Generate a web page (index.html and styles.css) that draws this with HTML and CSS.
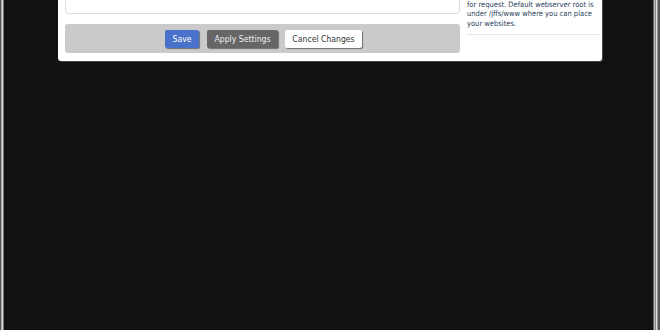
FILE: index.html
```html
<!DOCTYPE html>
<html lang="en">
<head>
    <meta charset="UTF-8">
    <meta name="viewport" content="width=device-width, initial-scale=1.0">
    <title>Lighttpd Settings</title>
    <link rel="stylesheet" href="styles.css">
</head>
<body>
    <div class="frame">
        <!-- Settings panel -->
        <div class="panel">
            <div class="main-col">
                <div class="section">
                    <div class="setting-row">
                        <span class="setting-label">gzip compression</span>
                        <label class="radio"><input type="radio" name="gzip" checked> Enable</label>
                        <label class="radio"><input type="radio" name="gzip"> Disable</label>
                    </div>
                </div>

                <div class="btn-bar">
                    <button type="button" class="save-btn">Save</button>
                    <button type="button" class="apply-btn">Apply Settings</button>
                    <button type="button" class="cancel-btn">Cancel Changes</button>
                </div>
            </div>

            <div class="help-col">
                <p class="help-text">Lighttpd is a lightweight web server<br>with a small memory footprint. Set<br>the HTTP/HTTPS port lighttpd will listen<br>for request. Default webserver root is<br>under /jffs/www where you can place<br>your websites.</p>
                <div class="help-sep"></div>
            </div>
        </div>
    </div>
</body>
</html>
```

FILE: styles.css
```css
/* Page frame */
body {
    margin: 0;
    padding: 0;
    height: 330px;
    overflow: hidden;
    font-family: "DejaVu Sans Condensed", "DejaVu Sans", sans-serif;
    font-stretch: condensed;
    background: #111111;
}

.frame {
    height: 330px;
    background: linear-gradient(to right,
        #555 0, #555 1px, #aaa 1px, #aaa 2px, #d8d8d8 2px, #d8d8d8 3px, #777 3px, #777 4px,
        #111 4px, #111 calc(100% - 7px),
        #666 calc(100% - 7px), #666 calc(100% - 6px), #bbb calc(100% - 6px), #bbb calc(100% - 5px),
        #888 calc(100% - 5px), #888 calc(100% - 4px), #ddd calc(100% - 4px), #ddd calc(100% - 3px),
        #999 calc(100% - 3px), #999 calc(100% - 2px), #555 calc(100% - 2px));
    overflow: hidden;
}

.panel {
    display: flex;
    gap: 7px;
    width: 544px;
    margin: -30px 0 0 58px;
    padding: 0 2px 8px 7px;
    box-sizing: border-box;
    background: #fff;
    border-radius: 0 0 3px 3px;
    box-shadow: 1px 1px 0 #444;
}

.main-col {
    width: 395px;
}

.section {
    height: 44px;
    box-sizing: border-box;
    border: 1px solid #dcdcdc;
    border-top: none;
    border-radius: 0 0 4px 4px;
    padding: 19px 0 0 8px;
}

.setting-row {
    display: flex;
    align-items: center;
    height: 12px;
    font-size: 8px;
    color: #333;
}

.setting-label {
    width: 134px;
}

.radio {
    display: flex;
    align-items: center;
    gap: 3px;
    margin-right: 12px;
}

.radio input {
    width: 7px;
    height: 7px;
    margin: 0;
}

.btn-bar {
    display: flex;
    justify-content: center;
    gap: 7px;
    margin-top: 10px;
    padding: 6px 0 5px 2px;
    background: #cacaca;
    border-radius: 3px;
}

button {
    height: 18px;
    padding: 0;
    border: none;
    border-radius: 2px;
    font-family: inherit;
    font-stretch: condensed;
    font-size: 8.6px;
    box-shadow: 1px 1px 1px rgba(0, 0, 0, 0.45);
    cursor: pointer;
}

.save-btn {
    width: 34px;
    margin-right: 1px;
    background: #4a72cb;
    color: #fff;
}

.apply-btn {
    width: 71px;
    background: #666666;
    color: #eee;
}

.cancel-btn {
    width: 77px;
    background: #fff;
    color: #333;
}

.help-col {
    width: 133px;
}

.help-text {
    margin: 0;
    padding-top: 1px;
    font-size: 7.5px;
    line-height: 9.6px;
    white-space: nowrap;
    color: #2c3f5e;
}

.help-sep {
    margin-top: 5px;
    border-top: 1px dotted #d0d0d0;
}
```
